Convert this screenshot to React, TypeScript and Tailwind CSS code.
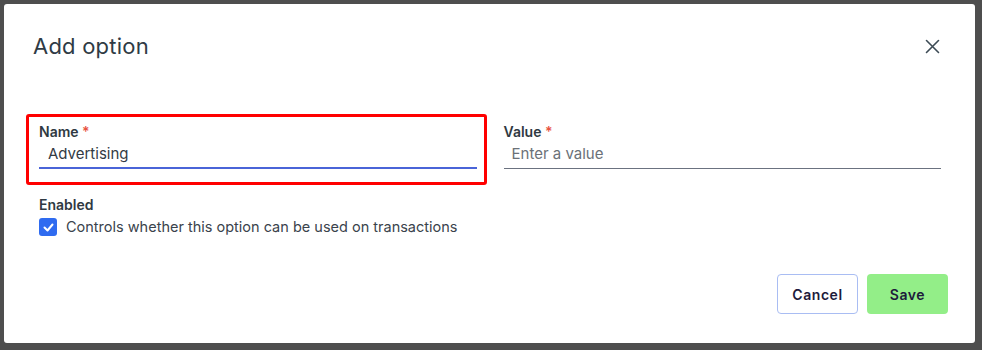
import React, { useState } from 'react';

export default function App() {
  const [name, setName] = useState('Advertising');
  const [value, setValue] = useState('');
  const [enabled, setEnabled] = useState(true);

  return (
    <div className="h-[350px] w-[982px] bg-[#4e4e4e] p-1 font-['Inter',sans-serif]">
      {/* Modal */}
      <div className="h-[339px] w-[971px] rounded-[3px] bg-white">
        {/* Header */}
        <div className="flex items-center justify-between pl-[29px] pr-[33px] pt-[28px]">
          <h2 className="text-[22px] leading-[28px] font-normal tracking-[0.01em] text-[#2f3b45]">Add option</h2>
          <button className="flex h-5 w-5 items-center justify-center text-[#3d4b55]" aria-label="Close">
            <svg width="15" height="15" viewBox="0 0 15 15" fill="none" stroke="currentColor" strokeWidth="1.6" strokeLinecap="round">
              <path d="M1.5 1.5l12 12M13.5 1.5l-12 12" />
            </svg>
          </button>
        </div>

        {/* Fields */}
        <div className="grid grid-cols-2 gap-[27px] pl-[35px] pr-[34px] pt-[62px]">
          <div className="relative">
            <div className="absolute -left-[13px] -right-[10px] -top-[8px] -bottom-[16px] rounded-[3px] border-[3px] border-[#ff0000]" />
            <label className="block text-[14px] leading-5 font-semibold text-[#2f3942]">
              Name <span className="text-[#e8533f]">*</span>
            </label>
            <input
              value={name}
              onChange={(e) => setName(e.target.value)}
              className="block h-[27px] w-full border-b-2 border-[#4a64d8] px-[9px] pb-[2px] text-[15px] text-[#333b44] outline-none"
            />
          </div>
          <div>
            <label className="block text-[14px] leading-5 font-semibold text-[#2f3942]">
              Value <span className="text-[#e8533f]">*</span>
            </label>
            <input
              value={value}
              onChange={(e) => setValue(e.target.value)}
              placeholder="Enter a value"
              className="block h-[27px] w-full border-b border-[#6b7280] px-[8px] pb-[3px] text-[15px] text-[#333b44] outline-none placeholder:text-[#6b7178]"
            />
          </div>
        </div>

        {/* Enabled */}
        <div className="pl-[35px] pt-[26px]">
          <div className="text-[14px] leading-5 font-semibold text-[#2f3942]">Enabled</div>
          <label className="mt-[2px] flex items-center gap-[9px]">
            <button
              onClick={() => setEnabled(!enabled)}
              className={`flex h-[18px] w-[18px] items-center justify-center rounded-[3px] ${enabled ? 'bg-[#2f6bf0]' : 'border border-gray-400 bg-white'}`}
            >
              {enabled && (
                <svg width="11" height="9" viewBox="0 0 11 9" fill="none" stroke="white" strokeWidth="2" strokeLinecap="round" strokeLinejoin="round">
                  <path d="M1.5 4.5l3 3 5-6" />
                </svg>
              )}
            </button>
            <span className="text-[14.5px] leading-5 text-[#3a434c]">Controls whether this option can be used on transactions</span>
          </label>
        </div>

        {/* Footer */}
        <div className="flex justify-end gap-[9px] pr-[27px] pt-[37px]">
          <button className="h-10 w-[81px] rounded-[4px] border border-[#a9bdf3] bg-white text-[14px] font-semibold tracking-[0.04em] text-[#1d1b3b]">
            Cancel
          </button>
          <button className="h-10 w-[81px] rounded-[4px] bg-[#93ee88] text-[14px] font-semibold tracking-[0.04em] text-[#1d1b3b]">
            Save
          </button>
        </div>
      </div>
    </div>
  );
}
